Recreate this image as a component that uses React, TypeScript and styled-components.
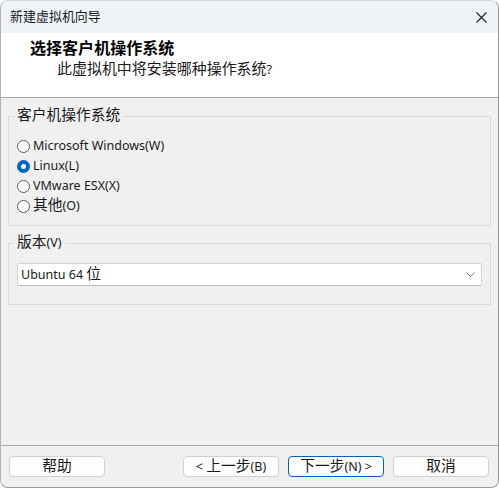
import React from "react";
import styled, { createGlobalStyle } from "styled-components";

const GlobalStyle = createGlobalStyle`
  html, body {
    margin: 0;
    padding: 0;
    background: #ffffff;
  }
  body {
    font-family: "Noto Sans", "Noto Sans CJK SC", sans-serif;
    font-size: 12.5px;
    color: #1a1a1a;
  }
`;

const HAN_RE = /([\u3000-\u9fff\uff00-\uffef]+)/;

// Chinese runs are drawn a bit larger than the Latin ones, as YaHei UI does
const Txt = ({ children }: { children: string }) => (
  <span>
    {children.split(HAN_RE).map((part, i) =>
      HAN_RE.test(part) ? <Han key={i}>{part}</Han> : part
    )}
  </span>
);

const options = [
  { id: "win", label: "Microsoft Windows(W)", checked: false },
  { id: "linux", label: "Linux(L)", checked: true },
  { id: "esx", label: "VMware ESX(X)", checked: false },
  { id: "other", label: "其他(O)", checked: false },
];

const App = () => {
  return (
    <>
      <GlobalStyle />
      <Window>
        <TitleBar>
          <TitleText>
            <Txt>新建虚拟机向导</Txt>
          </TitleText>
          <CloseIcon width="11" height="11" viewBox="0 0 11 11">
            <path d="M0.5 0.5 L10.5 10.5 M10.5 0.5 L0.5 10.5" stroke="#1f1f1f" strokeWidth="1.1" />
          </CloseIcon>
        </TitleBar>

        <Header>
          <HeaderTitle>
            <Txt>选择客户机操作系统</Txt>
          </HeaderTitle>
          <HeaderSub>
            <Txt>此虚拟机中将安装哪种操作系统?</Txt>
          </HeaderSub>
        </Header>

        <Body>
          <Group>
            <Legend>
              <Txt>客户机操作系统</Txt>
            </Legend>
            <RadioList>
              {options.map((opt) => (
                <RadioRow key={opt.id}>
                  <RadioDot $checked={opt.checked} />
                  <Txt>{opt.label}</Txt>
                </RadioRow>
              ))}
            </RadioList>
          </Group>

          <Group $bottom={18}>
            <Legend>
              <Txt>版本(V)</Txt>
            </Legend>
            <Combo>
              <Txt>Ubuntu 64 位</Txt>
              <svg width="9" height="5" viewBox="0 0 9 5">
                <polyline points="0.5,0.5 4.5,4.5 8.5,0.5" fill="none" stroke="#6a6a6a" strokeWidth="0.9" />
              </svg>
            </Combo>
          </Group>
        </Body>

        <Footer>
          <Button>
            <Txt>帮助</Txt>
          </Button>
          <Spacer />
          <Button>
            <Txt>{"< 上一步(B)"}</Txt>
          </Button>
          <Button $primary>
            <Txt>{"下一步(N) >"}</Txt>
          </Button>
          <Button>
            <Txt>取消</Txt>
          </Button>
        </Footer>
      </Window>
    </>
  );
};

/** Styles */
const Han = styled.span`
  font-family: "Noto Sans CJK SC", sans-serif;
  font-size: 1.18em;
  line-height: 1;
`;

const Window = styled.div`
  box-sizing: border-box;
  width: 499px;
  height: 488px;
  border: 1px solid #9a9a9a;
  border-top-color: #d4d4d4;
  border-left-color: #b4b4b4;
  border-radius: 8px;
  overflow: hidden;
  display: flex;
  flex-direction: column;
  background: #f0f0f0;
`;

const TitleBar = styled.div`
  height: 32px;
  flex: none;
  display: flex;
  align-items: center;
  justify-content: space-between;
  padding: 0 11px 0 9px;
  background: #eef3f8;
`;

const TitleText = styled.div`
  font-size: 11px;
  height: 20px;
  line-height: 20px;
  color: #1a1a1a;
`;

const CloseIcon = styled.svg`
  display: block;
`;

const Header = styled.div`
  height: 64px;
  flex: none;
  box-sizing: content-box;
  background: #ffffff;
  border-bottom: 1px solid #a8a8a8;
`;

const HeaderTitle = styled.div`
  font-weight: 700;
  font-size: 13.6px;
  height: 20px;
  line-height: 20px;
  margin: 6px 0 0 29px;
  color: #000;
`;

const HeaderSub = styled.div`
  font-size: 12.7px;
  height: 20px;
  line-height: 20px;
  margin-left: 56px;
  color: #1a1a1a;
`;

const Body = styled.div`
  flex: 1;
  padding: 8px 7px 0;
  display: flex;
  flex-direction: column;
  gap: 7px;
`;

const Group = styled.fieldset<{ $bottom?: number }>`
  margin: 0;
  padding: 10px 8px ${(p) => p.$bottom ?? 9}px;
  border: 1px solid #dcdcdc;
  border-radius: 0;
  min-width: 0;
`;

const Legend = styled.legend`
  padding: 0 3px;
  margin-left: -3px;
  height: 20px;
  line-height: 20px;
  color: #1a1a1a;
`;

const RadioList = styled.div`
  display: flex;
  flex-direction: column;
`;

const RadioRow = styled.div`
  height: 20px;
  line-height: 20px;
  display: flex;
  align-items: center;
  gap: 3px;
  color: #1a1a1a;
`;

const RadioDot = styled.span<{ $checked: boolean }>`
  box-sizing: border-box;
  width: 13px;
  height: 13px;
  border-radius: 50%;
  flex: none;
  background: ${(p) => (p.$checked ? "#ffffff" : "#fbfbfb")};
  border: ${(p) => (p.$checked ? "4px solid #0067c0" : "1px solid #5c5c5c")};
`;

const Combo = styled.div`
  box-sizing: border-box;
  height: 23px;
  display: flex;
  align-items: center;
  justify-content: space-between;
  padding: 0 6px 0 3px;
  background: #ffffff;
  border: 1px solid #d5d5d5;
  border-bottom-color: #bdbdbd;
  border-radius: 2px;
  line-height: 20px;

  svg {
    display: block;
  }
`;

const Footer = styled.div`
  box-sizing: border-box;
  height: 42px;
  flex: none;
  border-top: 1px solid #a8a8a8;
  display: flex;
  align-items: flex-start;
  gap: 9px;
  padding: 10px 9px 0 8px;
`;

const Spacer = styled.div`
  flex: 1;
`;

const Button = styled.div<{ $primary?: boolean }>`
  box-sizing: border-box;
  width: 96px;
  height: 21px;
  display: flex;
  align-items: center;
  justify-content: center;
  background: #fdfdfd;
  border: 1px solid ${(p) => (p.$primary ? "#0067c0" : "#d0d0d0")};
  border-radius: 4px;
  line-height: 19px;
  color: #1a1a1a;
`;

/** Exports */
export default App;
